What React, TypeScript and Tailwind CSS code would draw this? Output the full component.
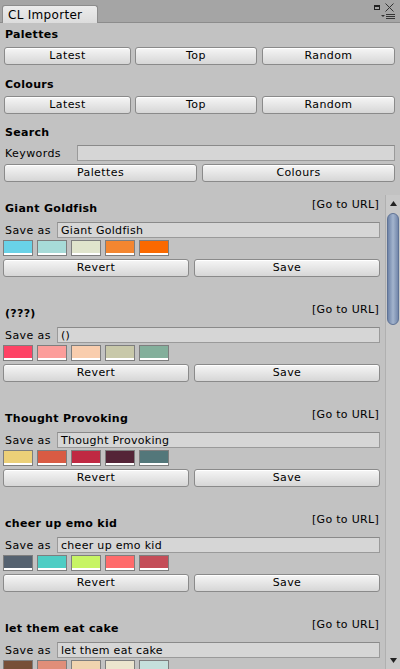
import React from "react";

type Palette = { title: string; saveAs: string; colors: string[] };

const palettes: Palette[] = [
  { title: "Giant Goldfish", saveAs: "Giant Goldfish", colors: ["#69d2e7", "#a7dbd8", "#e0e4cc", "#f38630", "#fa6900"] },
  { title: "(???)", saveAs: "()", colors: ["#fe4365", "#fc9d9a", "#f9cdad", "#c8c8a9", "#83af9b"] },
  { title: "Thought Provoking", saveAs: "Thought Provoking", colors: ["#ecd078", "#d95b43", "#c02942", "#542437", "#53777a"] },
  { title: "cheer up emo kid", saveAs: "cheer up emo kid", colors: ["#556270", "#4ecdc4", "#c7f464", "#ff6b6b", "#c44d58"] },
  { title: "let them eat cake", saveAs: "let them eat cake", colors: ["#774f38", "#e08e79", "#f1d4af", "#ece5ce", "#c5e0dc"] },
];

const font = { fontFamily: '"DejaVu Sans", Verdana, sans-serif' };

function Btn({ label, className = "" }: { label: string; className?: string }) {
  return (
    <div
      className={`h-[18px] flex items-center justify-center rounded-[3px] border border-[#8a8a8a] bg-gradient-to-b from-[#f6f6f6] to-[#d6d6d6] text-[11px] tracking-[0.4px] text-black shadow-[inset_0_1px_0_#ffffff] ${className}`}
    >
      {label}
    </div>
  );
}

function Field({ value = "", className = "" }: { value?: string; className?: string }) {
  return (
    <div
      className={`h-[16px] flex items-center border border-[#9a9a9a] border-t-[#8a8a8a] bg-[#d6d6d6] px-[3px] text-[11px] tracking-[0.3px] text-black leading-none ${className}`}
    >
      {value}
    </div>
  );
}

function Swatch({ color }: { color: string }) {
  return (
    <div className="w-[30px] h-[16px] flex flex-col border" style={{ borderColor: "rgba(0,0,0,0.35)" }}>
      <div className="flex-1" style={{ backgroundColor: color }} />
      <div className="h-[2px] bg-white" />
    </div>
  );
}

function Entry({ p, last }: { p: Palette; last: boolean }) {
  return (
    <div className="h-[105px] shrink-0 px-[3px]">
      <div className="h-[24px] flex justify-between items-start">
        <div className="mt-[5px] ml-[2px] h-[16px] leading-[16px] text-[11px] font-bold tracking-[0.3px] text-black">{p.title}</div>
        <div className="mt-[1px] mr-[1px] h-[16px] leading-[16px] text-[11px] tracking-[0.3px] text-black">[Go to URL]</div>
      </div>
      <div className="mt-[2px] h-[16px] flex items-center">
        <div className="w-[54px] pl-[2px] text-[11px] tracking-[0.4px] text-black leading-none">Save as</div>
        <Field value={p.saveAs} className="flex-1" />
      </div>
      <div className="mt-[2px] flex gap-[4px]">
        {p.colors.map((c, i) => (
          <Swatch key={i} color={c} />
        ))}
      </div>
      {!last && (
        <div className="mt-[3px] flex gap-[5px]">
          <Btn label="Revert" className="flex-1" />
          <Btn label="Save" className="flex-1" />
        </div>
      )}
    </div>
  );
}

export default function App() {
  return (
    <div className="w-[400px] h-[669px] overflow-hidden bg-[#c2c2c2] flex flex-col select-none" style={font}>
      {/* window tab strip */}
      <div className="h-[23px] shrink-0 bg-[#a5a5a5] border-b border-[#8c8c8c] relative flex items-end">
        <div className="ml-[2px] w-[96px] h-[18px] -mb-px rounded-t-[3px] border border-b-0 border-[#8c8c8c] bg-gradient-to-b from-[#ececec] to-[#dcdcdc] flex items-center pl-[5px] text-[12px] tracking-[0.3px] text-black">
          CL Importer
        </div>
        <div className="absolute right-[20px] top-[5px] w-[6px] h-[5px] border border-[#222] border-t-2" />
        <svg className="absolute right-[6px] top-[3px]" width="9" height="9" viewBox="0 0 9 9">
          <path d="M0.5 0.5 L8.5 8.5 M8.5 0.5 L0.5 8.5" stroke="#333" strokeWidth="1" />
        </svg>
        <svg className="absolute right-[5px] top-[13px]" width="14" height="7" viewBox="0 0 14 7">
          <path d="M0 2 L4 2 L2 4 Z" fill="#333" />
          <path d="M5 1.5 H14 M5 3.5 H14 M5 5.5 H14" stroke="#333" strokeWidth="1" />
        </svg>
      </div>

      {/* header controls */}
      <div className="shrink-0 pl-[4px] pr-[5px]">
        <div className="mt-[4px] h-[16px] leading-[16px] pl-[1px] text-[11px] font-bold tracking-[0.3px] text-black">Palettes</div>
        <div className="mt-[4px] flex">
          <Btn label="Latest" className="w-[127px]" />
          <Btn label="Top" className="w-[122px] ml-[4px]" />
          <Btn label="Random" className="w-[133px] ml-[5px]" />
        </div>
        <div className="mt-[12px] h-[16px] leading-[16px] pl-[1px] text-[11px] font-bold tracking-[0.3px] text-black">Colours</div>
        <div className="mt-[3px] flex">
          <Btn label="Latest" className="w-[127px]" />
          <Btn label="Top" className="w-[122px] ml-[4px]" />
          <Btn label="Random" className="w-[133px] ml-[5px]" />
        </div>
        <div className="mt-[11px] h-[16px] leading-[16px] pl-[1px] text-[11px] font-bold tracking-[0.3px] text-black">Search</div>
        <div className="mt-[4px] h-[16px] flex items-center">
          <div className="w-[73px] pl-[1px] text-[11px] tracking-[0.4px] text-black leading-none">Keywords</div>
          <Field className="flex-1 h-[15px]" />
        </div>
        <div className="mt-[3px] flex gap-[5px]">
          <Btn label="Palettes" className="flex-1" />
          <Btn label="Colours" className="flex-1" />
        </div>
      </div>

      {/* scroll view */}
      <div className="mt-[13px] flex-1 flex min-h-0">
        <div className="flex-1 flex flex-col pt-[1px] overflow-hidden">
          {palettes.map((p, i) => (
            <Entry key={i} p={p} last={i === palettes.length - 1} />
          ))}
        </div>
        <div className="w-[15px] ml-[2px] shrink-0 bg-[#c8c8c8] border-l border-[#b0b0b0] flex flex-col items-center">
          <svg className="mt-[6px]" width="7" height="5" viewBox="0 0 7 5">
            <path d="M3.5 0 L7 5 L0 5 Z" fill="#222" />
          </svg>
          <div className="mt-[7px] w-[12px] h-[112px] rounded-full border border-[#5f7396] bg-gradient-to-r from-[#6f84a8] via-[#a3b4cd] to-[#7488ab]" />
          <div className="flex-1" />
          <svg className="mb-[6px]" width="7" height="5" viewBox="0 0 7 5">
            <path d="M0 0 L7 0 L3.5 5 Z" fill="#222" />
          </svg>
        </div>
      </div>
    </div>
  );
}
